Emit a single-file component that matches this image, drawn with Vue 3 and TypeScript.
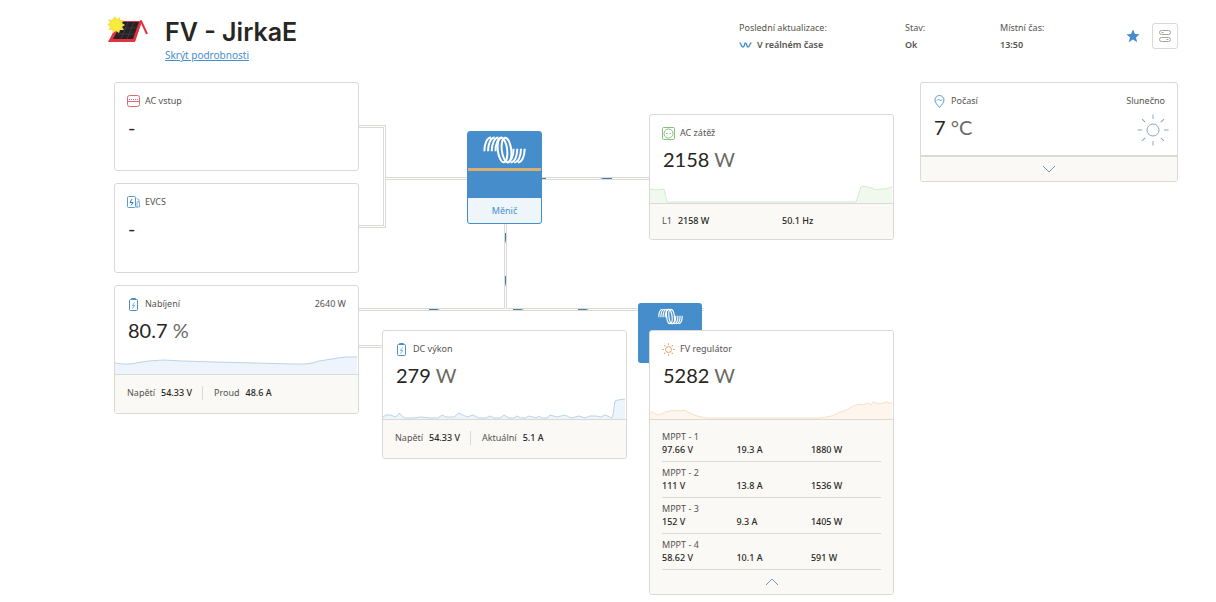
<script setup lang="ts">
type Point = [number, number]

interface Tracker {
  name: string
  voltage: string
  current: string
  power: string
}

const CHART_HEIGHT = 24

// Sparklines: x in 0–243, y is the height above the divider.
const loadPoints: Point[] = [
  [0, 14], [6, 13], [14, 14], [15, 10], [17, 1], [206, 1], [211, 16], [214, 17], [218, 16], [222, 15], [226, 13], [231, 14], [235, 14], [242, 16],
]
const batteryPoints: Point[] = [
  [0, 11], [8, 10], [15, 10], [27, 12], [34, 13], [48, 14], [67, 13], [100, 12], [140, 11], [177, 10], [190, 10], [197, 11], [204, 13], [217, 15], [223, 16], [230, 17], [242, 17],
]
const dcPoints: Point[] = [
  [0, 2], [3, 4], [8, 4], [12, 2], [14, 3], [16, 6], [19, 3], [22, 1], [30, 1], [38, 2], [48, 1], [55, 1], [59, 4], [63, 2], [71, 2], [76, 6], [80, 4], [84, 2], [90, 4], [96, 1], [103, 1],
  [107, 3], [111, 1], [117, 1], [121, 4], [126, 1], [131, 1], [134, 3], [138, 1], [143, 1], [145, 3], [150, 2], [153, 1], [156, 3], [159, 1], [164, 1], [167, 4], [174, 2], [182, 4], [188, 1],
  [196, 3], [202, 1], [207, 3], [213, 3], [218, 2], [222, 4], [227, 2], [229, 1], [230, 4], [232, 18], [235, 19], [242, 20],
]
const solarPoints: Point[] = [
  [0, 5], [2, 8], [4, 6], [7, 4], [11, 5], [15, 7], [20, 8], [22, 9], [24, 8], [27, 9], [30, 8], [34, 9], [38, 7], [42, 5], [47, 3], [57, 1], [170, 1], [182, 3], [188, 6], [196, 9], [203, 13],
  [210, 15], [212, 14], [218, 16], [221, 14], [223, 17], [227, 16], [230, 15], [233, 16], [237, 17], [239, 16], [242, 16],
]

const line = (points: Point[]): string =>
  points.map(([x, h], i) => `${i ? 'L' : 'M'}${x} ${CHART_HEIGHT - h}`).join(' ')
const area = (points: Point[]): string =>
  `${line(points)} V${CHART_HEIGHT} H0 Z`

const trackers: Tracker[] = [
  { name: 'MPPT - 1', voltage: '97.66 V', current: '19.3 A', power: '1880 W' },
  { name: 'MPPT - 2', voltage: '111 V', current: '13.8 A', power: '1536 W' },
  { name: 'MPPT - 3', voltage: '152 V', current: '9.3 A', power: '1405 W' },
  { name: 'MPPT - 4', voltage: '58.62 V', current: '10.1 A', power: '591 W' },
]

const wires: string[] = [
  'M0 44.5 H25.5 V144.5 H0',
  'M25.5 96.5 H290',
  'M146.5 142 V227.5',
  'M0 227.5 H345',
  'M0 264.5 H24',
]

const rays = [0, 45, 90, 135, 180, 225, 270, 315]
const coils = [0, 11, 22, 33]
const loops = [58, 70]
</script>

<template>
  <div class="page">
    <header class="header">
      <svg class="site-logo" viewBox="0 0 42 28" aria-hidden="true">
        <path d="M1 26 L12 5 H35 L28 26 Z" fill="#e2343f" />
        <path d="M6 23 L15 6 H32 L26 23 Z" fill="#262226" />
        <path d="M13 12 H30 M10 18 H28 M21 6 L14 23 M27 6 L20 23" stroke="#4f484c" stroke-width="0.600" fill="none" />
        <path d="M27 25 L34 5 L40 18" stroke="#e2343f" stroke-width="2" fill="none" stroke-linejoin="round" />
        <path d="M8 0 L10 3 L13 1 L13 4 L17 4 L15 7 L18 9 L15 11 L17 14 L13 14 L12 17 L9 15 L6 17 L5 14 L1 14 L3 11 L0 8 L3 7 L1 3 L5 4 Z" fill="#f1e54a" />
        <circle cx="9" cy="9" r="5" fill="#f5ec3b" />
      </svg>
      <div class="site">
        <h1>FV - JirkaE</h1>
        <a href="#details">Skrýt podrobnosti</a>
      </div>
      <dl class="meta">
        <div>
          <dt>Poslední aktualizace:</dt>
          <dd>
            <svg class="live" viewBox="0 0 13 8" aria-hidden="true">
              <path d="M1 2 C2 2 2 6 4 6 S5 2 6.500 2 S7.500 6 9 6 S11 2 12 2" fill="none" stroke="#468ecb" stroke-width="1.400" stroke-linecap="round" />
            </svg>
            V reálném čase
          </dd>
        </div>
        <div>
          <dt>Stav:</dt>
          <dd>Ok</dd>
        </div>
        <div>
          <dt>Místní čas:</dt>
          <dd>13:50</dd>
        </div>
      </dl>
      <div class="actions">
        <button type="button" class="star" aria-label="Oblíbené">
          <svg viewBox="0 0 14 14" aria-hidden="true">
            <path d="M7 0.500 L9 5 L13.500 5.300 L10 8.500 L11.200 13.200 L7 10.600 L2.800 13.200 L4 8.500 L0.500 5.300 L5 5 Z" fill="#468ecb" />
          </svg>
        </button>
        <button type="button" class="toggles" aria-label="Nastavení">
          <svg viewBox="0 0 14 14" fill="none" stroke="#a3a3a0" stroke-width="1" aria-hidden="true">
            <rect x="1.500" y="1.500" width="11" height="4" rx="2" />
            <rect x="1.500" y="8.500" width="11" height="4" rx="2" />
            <path d="M3.500 3.500 H5.500 M8.500 10.500 H10.500" />
          </svg>
        </button>
      </div>
    </header>

    <main class="board">
      <section class="sources">
        <article class="card">
          <div class="body">
            <h2>
              <svg viewBox="0 0 13 13" fill="none" stroke="#dc6a72" aria-hidden="true">
                <rect x="0.500" y="0.500" width="12" height="11" rx="2" />
                <path d="M0.500 6.500 H12.500" />
                <path d="M2 4.500 H11" stroke-dasharray="1 1" />
              </svg>
              AC vstup
            </h2>
            <p class="value">-</p>
          </div>
        </article>
        <article class="card">
          <div class="body">
            <h2>
              <svg viewBox="0 0 13 13" fill="none" stroke="#5a9bd0" aria-hidden="true">
                <rect x="0.500" y="0.500" width="8" height="11" rx="1" />
                <path d="M10 11.500 V7 Q10 5.500 11 5.500 Q12.500 5.500 12.500 7 V11 H9 M9.500 2 L12 4 V6" stroke-width="0.800" />
                <path d="M5 3 L3 6.500 H6 L4 9.500" stroke="#2f78b4" />
              </svg>
              EVCS
            </h2>
            <p class="value">-</p>
          </div>
        </article>
        <article class="card">
          <div class="body">
            <h2>
              <svg viewBox="0 0 13 13" fill="none" stroke="#4a90cc" aria-hidden="true">
                <rect x="2.500" y="1.500" width="8" height="11" rx="1" />
                <path d="M4.500 1.500 V0.500 H8.500 V1.500" />
                <path d="M7.500 4.500 L5.500 7.500 H7.500 L5.500 10.500" stroke-width="0.700" />
              </svg>
              Nabíjení
              <span class="side">2640 W</span>
            </h2>
            <p class="value">80.7 <span>%</span></p>
            <svg class="chart blue" viewBox="0 0 243 24" preserveAspectRatio="none" aria-hidden="true">
              <path class="area" :d="area(batteryPoints)" />
              <path class="line" :d="line(batteryPoints)" />
            </svg>
          </div>
          <dl class="foot pair">
            <div><dt>Napětí</dt><dd>54.33 V</dd></div>
            <div><dt>Proud</dt><dd>48.6 A</dd></div>
          </dl>
        </article>
      </section>

      <section class="hub">
        <svg class="wires" viewBox="0 0 290 332" preserveAspectRatio="none" aria-hidden="true">
          <path v-for="wire in wires" :key="`o${wire}`" :d="wire" class="outer" />
          <path v-for="wire in wires" :key="`i${wire}`" :d="wire" class="inner" />
          <g fill="#4a7cab">
            <path d="M241 96 H253 V97 H244 Z M183 96 H187 V97 H183 Z" />
            <path d="M146 151 H147 V162 L146 158 Z M146 194 H147 V205 L146 201 Z" />
            <path d="M70 227 H81 L78 228 H70 Z M154 227 H165 L162 228 H154 Z M219 227 H230 L227 228 H219 Z" />
          </g>
        </svg>

        <div class="inverter">
          <div class="inverter-head">
            <svg class="coil" viewBox="0 0 128 82" aria-hidden="true">
              <g fill="none" stroke="#fff" stroke-width="6">
                <path v-for="c in coils" :key="`l${c}`" :d="`M${4 + c} 45 C${4 + c} 22 ${12 + c} 4 ${24 + c} 4`" />
                <ellipse v-for="x in loops" :key="x" :cx="x" cy="41" rx="14" ry="37" :transform="`rotate(-7 ${x} 41)`" />
                <path v-for="c in coils" :key="`r${c}`" :d="`M${124 - c} 37 C${124 - c} 60 ${116 - c} 78 ${104 - c} 78`" />
              </g>
            </svg>
          </div>
          <div class="inverter-body"></div>
          <div class="inverter-name">Měnič</div>
        </div>

        <article class="card">
          <div class="body">
            <h2>
              <svg viewBox="0 0 13 13" fill="none" stroke="#4a90cc" aria-hidden="true">
                <rect x="2.500" y="1.500" width="8" height="11" rx="1" />
                <path d="M4.500 1.500 V0.500 H8.500 V1.500" />
                <path d="M7.500 4.500 L5.500 7.500 H7.500 L5.500 10.500" stroke-width="0.700" />
              </svg>
              DC výkon
            </h2>
            <p class="value">279 <span>W</span></p>
            <svg class="chart blue" viewBox="0 0 243 24" preserveAspectRatio="none" aria-hidden="true">
              <path class="area" :d="area(dcPoints)" />
              <path class="line" :d="line(dcPoints)" />
            </svg>
          </div>
          <dl class="foot pair">
            <div><dt>Napětí</dt><dd>54.33 V</dd></div>
            <div><dt>Aktuální</dt><dd>5.1 A</dd></div>
          </dl>
        </article>
      </section>

      <section class="loads">
        <article class="card">
          <div class="body">
            <h2>
              <svg viewBox="0 0 13 13" fill="none" stroke="#86c27a" aria-hidden="true">
                <rect x="0.500" y="0.500" width="12" height="12" rx="1" />
                <circle cx="6.500" cy="6.500" r="4.500" />
                <path d="M4 6.500 H5.500 M7.500 6.500 H9" />
              </svg>
              AC zátěž
            </h2>
            <p class="value">2158 <span>W</span></p>
            <svg class="chart green" viewBox="0 0 243 24" preserveAspectRatio="none" aria-hidden="true">
              <path class="area" :d="area(loadPoints)" />
              <path class="line" :d="line(loadPoints)" />
            </svg>
          </div>
          <dl class="foot phase">
            <div><dt>L1</dt><dd>2158 W</dd></div>
            <div><dd>50.1 Hz</dd></div>
          </dl>
        </article>

        <div class="solar">
          <div class="charger">
            <svg class="coil" viewBox="0 0 128 82" aria-hidden="true">
              <g fill="none" stroke="#fff" stroke-width="6">
                <path v-for="c in coils" :key="`l${c}`" :d="`M${4 + c} 45 C${4 + c} 22 ${12 + c} 4 ${24 + c} 4`" />
                <ellipse v-for="x in loops" :key="x" :cx="x" cy="41" rx="14" ry="37" :transform="`rotate(-7 ${x} 41)`" />
                <path v-for="c in coils" :key="`r${c}`" :d="`M${124 - c} 37 C${124 - c} 60 ${116 - c} 78 ${104 - c} 78`" />
              </g>
            </svg>
          </div>
          <article class="card">
            <div class="body">
              <h2>
                <svg viewBox="0 0 13 13" fill="none" stroke="#e8a066" aria-hidden="true">
                  <circle cx="6.500" cy="6.500" r="3" />
                  <path v-for="r in rays" :key="r" d="M6.500 0.300 V2" :transform="`rotate(${r} 6.500 6.500)`" />
                </svg>
                FV regulátor
              </h2>
              <p class="value">5282 <span>W</span></p>
              <svg class="chart orange" viewBox="0 0 243 24" preserveAspectRatio="none" aria-hidden="true">
                <path class="area" :d="area(solarPoints)" />
                <path class="line" :d="line(solarPoints)" />
              </svg>
            </div>
            <div class="foot list">
              <table>
                <colgroup>
                  <col class="third" />
                  <col class="third" />
                  <col />
                </colgroup>
                <tbody v-for="t in trackers" :key="t.name">
                  <tr>
                    <th colspan="3" scope="rowgroup">{{ t.name }}</th>
                  </tr>
                  <tr>
                    <td>{{ t.voltage }}</td>
                    <td>{{ t.current }}</td>
                    <td>{{ t.power }}</td>
                  </tr>
                </tbody>
              </table>
              <button type="button" class="expander" aria-label="Sbalit">
                <svg viewBox="0 0 14 8" aria-hidden="true"><path d="M1 7 L7 1 L13 7" /></svg>
              </button>
            </div>
          </article>
        </div>
      </section>

      <aside>
        <article class="card weather">
          <div class="body">
            <div>
              <h2>
                <svg viewBox="0 0 13 13" fill="none" stroke="#4a90cc" aria-hidden="true">
                  <path d="M6.500 12.500 C4 9.500 2 7.500 2 5 A4.500 4.500 0 0 1 11 5 C11 7.500 9 9.500 6.500 12.500 Z" stroke-width="0.900" />
                  <path d="M4 5.500 Q5.200 3.200 6.500 5 T9 4.500" stroke-width="0.900" />
                </svg>
                Počasí
              </h2>
              <p class="value">7 <span>°C</span></p>
            </div>
            <div class="sky">
              <span>Slunečno</span>
              <svg viewBox="0 0 32 32" fill="none" stroke="#8aa6c0" aria-hidden="true">
                <circle cx="16" cy="16" r="6" />
                <path v-for="r in rays" :key="r" d="M16 0.500 V5" :transform="`rotate(${r} 16 16)`" />
              </svg>
            </div>
          </div>
          <div class="foot list">
            <button type="button" class="expander" aria-label="Rozbalit">
              <svg viewBox="0 0 14 8" aria-hidden="true"><path d="M1 1 L7 7 L13 1" /></svg>
            </button>
          </div>
        </article>
      </aside>
    </main>
  </div>
</template>

<style>
body {
  margin: 0;
  background: #fff;
}
</style>

<style scoped>
.page {
  box-sizing: border-box;
  padding: 16px 38px 7px 107px;
  font-family: "Noto Sans", "Open Sans", sans-serif;
  font-size: 9px;
  line-height: 14px;
  color: #55534f;
}
h1, h2, p, dl, dt, dd {
  margin: 0;
}
button {
  padding: 0;
  border: 0;
  background: none;
  cursor: pointer;
}
svg {
  display: block;
  flex: none;
}
.header {
  display: flex;
  align-items: flex-start;
  height: 66px;
}
.site-logo {
  width: 42px;
  height: 28px;
}
.site {
  flex: 1;
  margin-left: 16px;
}
h1 {
  font-family: Inter, "Noto Sans", sans-serif;
  font-size: 25px;
  line-height: 32px;
  font-weight: 600;
  color: #272622;
}
.site a {
  display: block;
  width: max-content;
  font-size: 10px;
  color: #468ecb;
}
.meta {
  display: grid;
  grid-template-columns: 166px 95px 126px;
  padding-top: 3px;
  line-height: 17px;
}
.meta dd {
  display: flex;
  align-items: center;
  gap: 5px;
  font-weight: 600;
}
.live {
  width: 13px;
  height: 8px;
}
.actions {
  display: flex;
  align-items: center;
  gap: 12px;
  padding-top: 7px;
}
.star svg,
.toggles svg {
  width: 14px;
  height: 14px;
}
.toggles {
  display: grid;
  place-items: center;
  width: 26px;
  height: 26px;
  border: 1px solid #d9d9d6;
  border-radius: 3px;
}
.board {
  display: grid;
  grid-template-columns: 245fr 290fr 245fr 284fr;
  align-items: start;
  margin-left: 7px;
}
.board > aside {
  margin-left: 26px;
}
.sources {
  display: grid;
  grid-template-rows: minmax(89px, auto) minmax(90px, auto) auto;
  gap: 12px;
}
.hub {
  position: relative;
  display: flex;
  flex-direction: column;
  gap: 106px;
  padding: 49px 22px 0 23px;
}
.loads {
  display: flex;
  flex-direction: column;
  gap: 90px;
  padding-top: 32px;
}
.card {
  position: relative;
  overflow: hidden;
  border: 1px solid #d9d9d6;
  border-radius: 3px;
  background: #fff;
}
.body {
  padding: 11px 12px 0;
}
h2 {
  display: flex;
  align-items: center;
  gap: 5px;
  font-size: 9px;
  line-height: 14px;
  font-weight: 400;
}
h2 svg {
  width: 13px;
  height: 13px;
}
.side {
  margin-left: auto;
}
.value {
  padding-left: 1px;
  font-family: Lato, sans-serif;
  font-size: 20px;
  line-height: 38px;
  color: #272622;
}
.value span {
  color: #6a6966;
}
.chart {
  width: calc(100% + 24px);
  height: 24px;
  margin: 1px -12px 0;
}
.chart .line {
  fill: none;
  vector-effect: non-scaling-stroke;
}
.blue .area { fill: #edf4fb; }
.blue .line { stroke: #bdd3e8; }
.green .area { fill: #f1f9ef; }
.green .line { stroke: #d3ebcd; }
.orange .area { fill: #fef6ec; }
.orange .line { stroke: #f6e0c6; }
.foot {
  border-top: 1px solid #d9d9d6;
  background: #faf9f6;
}
.foot dd,
.foot td {
  color: #272622;
  font-weight: 500;
}
.pair {
  display: flex;
  padding: 11px 12px 13px;
}
.pair div {
  display: flex;
  gap: 6px;
}
.pair div + div {
  margin-left: 10px;
  padding-left: 11px;
  border-left: 1px solid #d9d9d6;
}
.phase {
  display: grid;
  grid-template-columns: 1fr 1fr;
  gap: 21px;
  padding: 10px 12px 11px;
}
.phase div {
  display: flex;
  gap: 6px;
}
.list {
  padding: 0 12px;
}
table {
  width: 100%;
  margin-top: 6px;
  border-collapse: separate;
  border-spacing: 0;
  table-layout: fixed;
}
.third {
  width: 34%;
}
th {
  padding: 4px 0 0;
  line-height: 14px;
  text-align: left;
  font-weight: 400;
}
td {
  padding: 0 0 5px;
  line-height: 12px;
  border-bottom: 1px solid #d9d9d6;
}
.expander {
  display: grid;
  place-items: center;
  width: 100%;
  height: 24px;
}
.expander svg {
  width: 14px;
  height: 8px;
  fill: none;
  stroke: #6f9cc4;
}
.wires {
  position: absolute;
  inset: 0 0 auto;
  width: 100%;
  height: 332px;
  overflow: visible;
}
.wires .outer,
.wires .inner {
  fill: none;
  stroke: #d9d9d6;
  stroke-width: 3;
  vector-effect: non-scaling-stroke;
}
.wires .inner {
  stroke: #fff;
  stroke-width: 1;
}
.inverter {
  position: relative;
  align-self: center;
  box-sizing: border-box;
  width: 75px;
  border: 1px solid #468ecb;
  border-radius: 3px;
  overflow: hidden;
  background: #468ecb;
}
.inverter-head {
  display: grid;
  place-items: center;
  height: 36px;
  border-bottom: 3px solid #d9ae72;
}
.coil {
  width: 43px;
  height: 28px;
}
.inverter-body {
  height: 27px;
}
.inverter-name {
  line-height: 25px;
  text-align: center;
  color: #468ecb;
  background: #eef5fb;
}
.solar {
  position: relative;
}
.charger {
  position: absolute;
  top: -27px;
  left: -11px;
  box-sizing: border-box;
  width: 64px;
  height: 60px;
  padding: 5px 20px;
  border-radius: 3px;
  background: #468ecb;
}
.charger .coil {
  width: 25px;
  height: 17px;
}
.weather .body {
  display: flex;
  justify-content: space-between;
  height: 61px;
}
.weather .foot {
  border-top-width: 2px;
}
.sky {
  display: flex;
  flex-direction: column;
  align-items: flex-end;
}
.sky svg {
  width: 32px;
  height: 32px;
  margin: 6px -4px 0 0;
}
</style>
